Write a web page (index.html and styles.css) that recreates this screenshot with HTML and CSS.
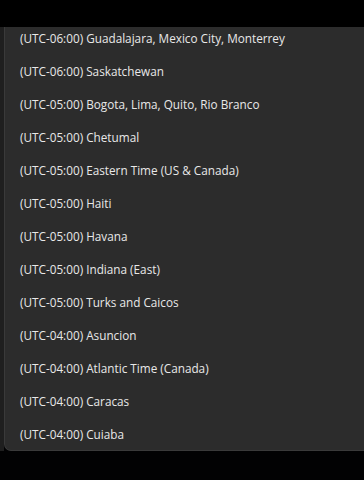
FILE: index.html
```html
<!DOCTYPE html>
<html>
<head>
<meta charset="utf-8">
<link rel="stylesheet" href="styles.css">
</head>
<body>
<div class="screen">
  <div class="topbar"></div>
  <div class="main">
    <div class="strip"></div>
    <div class="panel">
      <ul class="list">
        <li class="item">(UTC-06:00) Guadalajara, Mexico City, Monterrey</li>
        <li class="item">(UTC-06:00) Saskatchewan</li>
        <li class="item">(UTC-05:00) Bogota, Lima, Quito, Rio Branco</li>
        <li class="item">(UTC-05:00) Chetumal</li>
        <li class="item">(UTC-05:00) Eastern Time (US &amp; Canada)</li>
        <li class="item">(UTC-05:00) Haiti</li>
        <li class="item">(UTC-05:00) Havana</li>
        <li class="item">(UTC-05:00) Indiana (East)</li>
        <li class="item">(UTC-05:00) Turks and Caicos</li>
        <li class="item">(UTC-04:00) Asuncion</li>
        <li class="item">(UTC-04:00) Atlantic Time (Canada)</li>
        <li class="item">(UTC-04:00) Caracas</li>
        <li class="item">(UTC-04:00) Cuiaba</li>
      </ul>
    </div>
  </div>
</div>
</body>
</html>
```
FILE: styles.css
```css
html, body {
  margin: 0;
  padding: 0;
  background: #020203;
}
.screen {
  width: 364px;
  height: 480px;
  overflow: hidden;
  display: flex;
  flex-direction: column;
}
.topbar {
  height: 27px;
  background: #000000;
  flex: none;
}
.main {
  display: flex;
  height: 424px;
  flex: none;
}
.strip {
  width: 4px;
  background: #1f1f1f;
  flex: none;
}
.panel {
  flex: 1;
  background: #2c2c2c;
  border-left: 1px solid #3a3a3a;
  border-bottom: 1px solid #3a3a3a;
  border-bottom-left-radius: 7px;
  overflow: hidden;
}
.list {
  list-style: none;
  margin: -5.5px 0 0 0;
  padding: 0;
}
.item {
  height: 33.08px;
  line-height: 33px;
  padding-left: 15px;
  font-family: "Open Sans", "Noto Sans", sans-serif;
  font-size: 11.75px;
  color: #e8e8e8;
  white-space: nowrap;
}
```
